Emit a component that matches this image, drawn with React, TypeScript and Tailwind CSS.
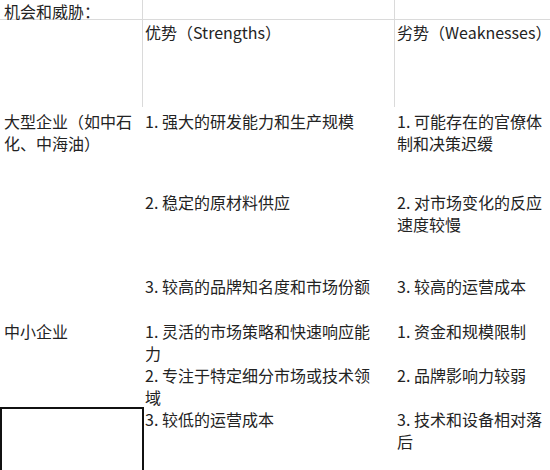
import React from "react";

type Row = {
  h: string;
  pt: string;
  c1?: string[];
  c2?: string[];
  c3?: string[];
  box?: boolean;
};

const rows: Row[] = [
  {
    h: "h-[84px]",
    pt: "pt-[3px]",
    c1: ["大型企业（如中石", "化、中海油）"],
    c2: ["1. 强大的研发能力和生产规模"],
    c3: ["1. 可能存在的官僚体", "制和决策迟缓"],
  },
  {
    h: "h-[84px]",
    pt: "pt-0",
    c2: ["2. 稳定的原材料供应"],
    c3: ["2. 对市场变化的反应", "速度较慢"],
  },
  {
    h: "h-[45px]",
    pt: "pt-0",
    c2: ["3. 较高的品牌知名度和市场份额"],
    c3: ["3. 较高的运营成本"],
  },
  {
    h: "h-[44px]",
    pt: "pt-0",
    c1: ["中小企业"],
    c2: ["1. 灵活的市场策略和快速响应能", "力"],
    c3: ["1. 资金和规模限制"],
  },
  {
    h: "h-[44px]",
    pt: "pt-0",
    c2: ["2. 专注于特定细分市场或技术领", "域"],
    c3: ["2. 品牌影响力较弱"],
  },
  {
    h: "h-[70px]",
    pt: "pt-0",
    box: true,
    c2: ["3. 较低的运营成本"],
    c3: ["3. 技术和设备相对落", "后"],
  },
];

function Lines({ lines }: { lines?: string[] }) {
  if (!lines) return null;
  return (
    <>
      {lines.map((l, i) => (
        <div key={i} className="whitespace-nowrap leading-[22px]">
          {l}
        </div>
      ))}
    </>
  );
}

export default function App() {
  return (
    <div
      className="w-[550px] h-[470px] overflow-hidden bg-white text-[16px] text-[#232323]"
      style={{ fontFamily: '"Noto Sans CJK SC", "Noto Sans", sans-serif' }}
    >
      {/* Title row */}
      <div className="grid grid-cols-[143px_252px_155px] h-[20px] border-b border-[#dadada]">
        <div className="border-r border-[#dadada] pl-[4px] leading-[20px] pt-[1px] whitespace-nowrap">
          机会和威胁：
        </div>
        <div className="border-r border-[#dadada]" />
        <div />
      </div>
      {/* Header row */}
      <div className="grid grid-cols-[143px_252px_155px] h-[87px]">
        <div className="border-r border-[#dadada]" />
        <div className="border-r border-[#dadada] pl-[2px] pt-[1px] leading-[22px] whitespace-nowrap">
          优势（Strengths）
        </div>
        <div className="pl-[2px] pt-[1px] leading-[22px] whitespace-nowrap">
          劣势（Weaknesses）
        </div>
      </div>
      {rows.map((r, i) => (
        <div key={i} className={`grid grid-cols-[143px_252px_155px] ${r.h}`}>
          {r.box ? (
            <div className="w-[144px] h-[70px] -mt-[1px] border-2 border-[#111]" />
          ) : (
            <div className={`pl-[4px] ${r.pt}`}>
              <Lines lines={r.c1} />
            </div>
          )}
          <div className={`pl-[2px] ${r.pt}`}>
            <Lines lines={r.c2} />
          </div>
          <div className={`pl-[2px] ${r.pt}`}>
            <Lines lines={r.c3} />
          </div>
        </div>
      ))}
    </div>
  );
}
